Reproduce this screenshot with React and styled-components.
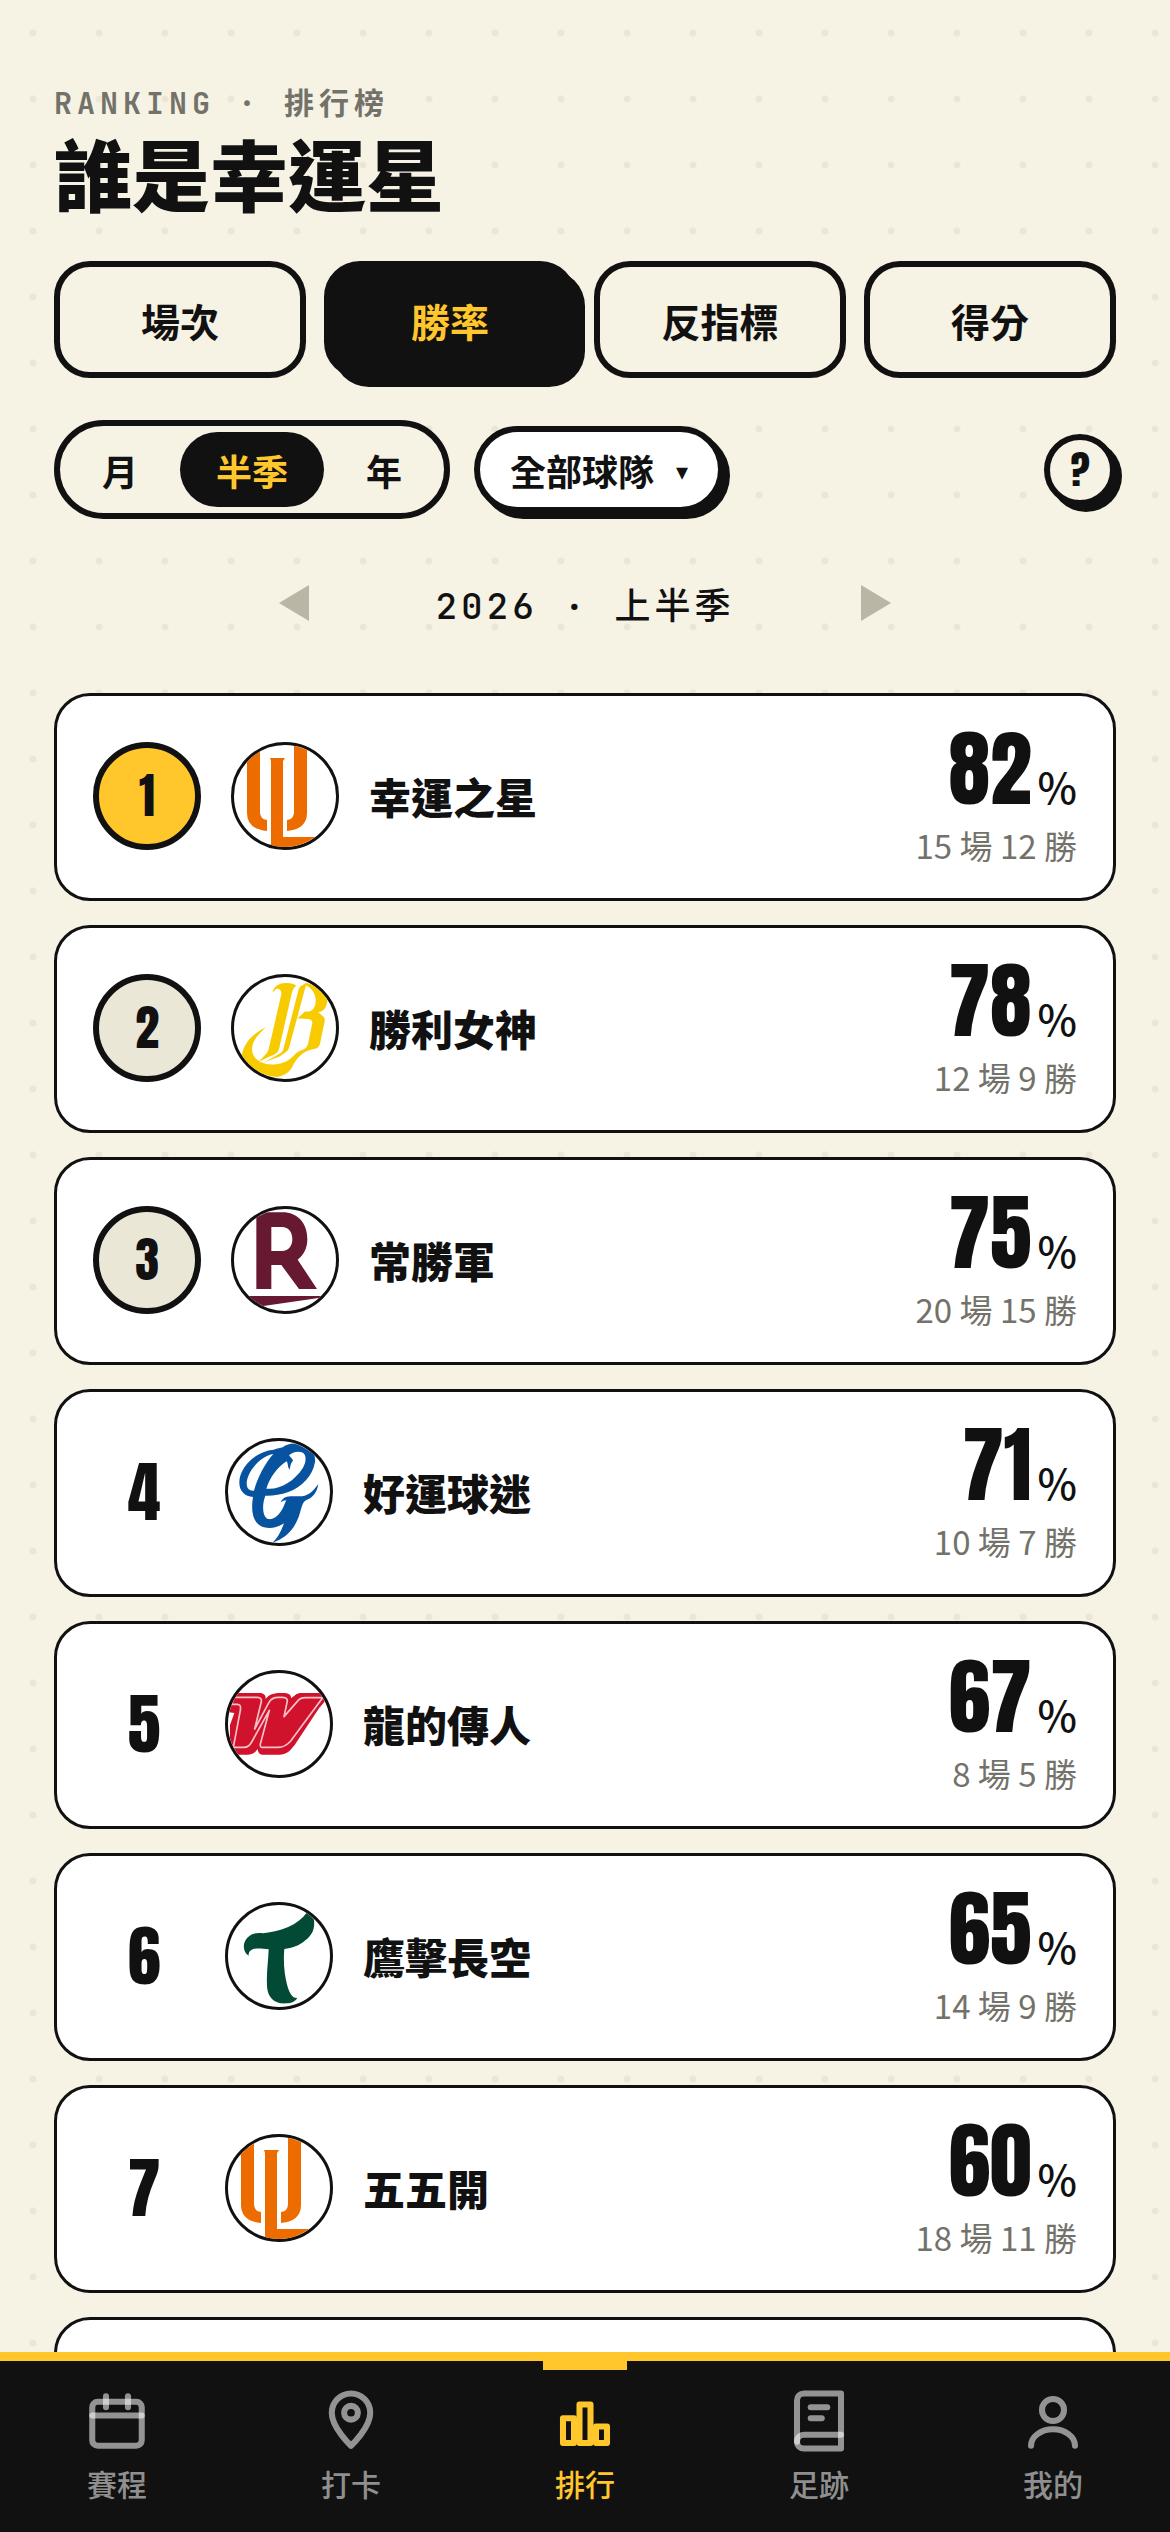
import { useState } from "react"
import styled, { createGlobalStyle } from "styled-components"

const INK = "#111111"
const PAPER = "#f6f2e4"
const YELLOW = "#ffc72c"
const SANS = '"Noto Sans CJK TC", "Noto Sans", sans-serif'
const MONO = '"JetBrains Mono", "DejaVu Sans Mono", "Noto Sans CJK TC", monospace'
const DISPLAY = 'Anton, Impact, Roboto, sans-serif'

const metrics = ["場次", "勝率", "反指標", "得分"]
const periods = ["月", "半季", "年"]

const players = [
    { name: "幸運之星", team: "lions", rate: 82, games: 15, wins: 12 },
    { name: "勝利女神", team: "brothers", rate: 78, games: 12, wins: 9 },
    { name: "常勝軍", team: "monkeys", rate: 75, games: 20, wins: 15 },
    { name: "好運球迷", team: "guardians", rate: 71, games: 10, wins: 7 },
    { name: "龍的傳人", team: "dragons", rate: 67, games: 8, wins: 5 },
    { name: "鷹擊長空", team: "hawks", rate: 65, games: 14, wins: 9 },
    { name: "五五開", team: "lions", rate: 60, games: 18, wins: 11 },
]

const navItems = [
    { id: "schedule", label: "賽程" },
    { id: "checkin", label: "打卡" },
    { id: "ranking", label: "排行" },
    { id: "history", label: "足跡" },
    { id: "profile", label: "我的" },
]

const logos = {
    lions: (
        <svg viewBox="0 0 102 102" fill="#ed6c00">
            <path d="M13 0H26V67Q26 74 33 75V86Q13 84 13 68Z" />
            <path d="M60 0H73V68Q73 84 53 86V75Q60 74 60 67Z" />
            <path d="M36 13H51L49 16V92H82V102H37V16Z" />
        </svg>
    ),
    brothers: (
        <svg viewBox="72 84 306 306" fill="#f8cb00">
            <path d="M187 131C192 111 207 101 231 102C244 102 252 105 259 110C252 114 249 121 246 130L207 300C204 311 196 317 184 320L146 338L168 315C174 308 175 304 177 296L214 136C215 124 207 117 198 120Z" />
            <path d="M288 102L273 111C268 115 266 120 264 128L220 301C217 311 210 315 198 320L160 341L210 322L228 309C235 303 236 300 238 293L288 108Z" />
            <path d="M286 102C315 105 340 124 352 153C351 174 342 187 325 190L342 205C346 211 344 219 342 226L331 280C328 294 322 300 311 300C286 304 267 318 250 347C241 369 225 378 203 384C162 382 116 362 95 318C103 281 128 254 168 235C141 259 126 278 126 301C127 325 144 340 174 346C206 348 231 340 248 323C266 303 278 304 287 297C293 291 294 284 296 275L307 222C307 213 302 210 293 210L262 208C273 199 279 193 286 187L294 188C308 186 318 174 317 153C316 133 306 118 286 108Z" />
        </svg>
    ),
    monkeys: (
        <svg viewBox="72 87 306 306" fill="#681932">
            <path fillRule="evenodd" d="M139 97H217C263 97 292 129 292 177C292 205 281 225 263 239L321 327H267L214 255H184V327H139ZM184 141V213H216C236 213 247 197 247 178C247 156 236 141 216 141Z" />
            <path d="M100 348H342L326 354L155 379C134 373 117 362 100 348Z" />
        </svg>
    ),
    guardians: (
        <svg viewBox="54 69 306 306" fill="#0853a0">
            <path fillRule="evenodd" d="M218 88C238 73 260 74 281 84C304 94 318 108 315 132C309 173 275 208 235 222C210 231 185 234 166 233C154 264 159 300 175 303C196 307 215 284 226 253L229 247C220 248 216 251 212 253C218 241 225 236 242 235L277 235C297 232 311 217 325 198C321 223 309 239 289 246C277 252 276 266 267 294C251 338 225 361 187 374C202 361 211 345 222 316C200 330 181 333 162 328C131 319 121 284 129 237C104 235 87 219 88 191C90 145 139 99 191 95C202 91 211 91 218 88ZM190 108C152 113 112 160 110 195C110 211 117 219 132 218C143 177 166 135 190 108ZM169 212C208 217 252 191 278 151C289 133 290 112 279 104C262 98 246 104 237 112C243 120 248 123 249 128C242 134 241 145 239 155C232 147 235 137 230 130C203 146 180 178 169 212Z" />
        </svg>
    ),
    dragons: (
        <svg viewBox="54 72 306 306">
            <path fill="#d0122d" d="M72 132H147C162 132 170 141 166 151L170 146C182 133 200 132 219 132C237 132 244 138 243 148L256 138C264 132 270 132 283 132H354C351 152 340 164 328 176L254 288C238 308 230 317 207 317H160C148 317 143 309 143 299C135 312 126 317 112 317H60V228L73 192L58 190V145Z" />
            <path fill="none" stroke="#f9c3ca" strokeWidth="5" strokeLinejoin="round" d="M65 166L72 145H141C153 145 156 151 153 162L134 240L177 160C183 149 191 145 205 145H218C230 145 234 151 231 161L222 203L264 155C270 148 276 146 286 146H338L242 276C229 291 220 295 204 295H155C150 295 150 287 152 281L178 184L125 279C119 290 113 295 103 295H70L91 184C93 170 90 166 82 166Z" />
        </svg>
    ),
    hawks: (
        <svg viewBox="54 84 306 306" fill="#024a35">
            <path d="M160 169C212 162 263 146 292 105L312 128C315 155 307 174 286 190C268 207 246 213 223 216C219 256 224 297 232 326C238 347 247 364 262 363C252 379 233 380 211 379C184 372 172 353 171 326C169 285 175 251 176 217C158 215 141 212 128 217C119 220 115 228 116 236C103 229 99 210 103 198C111 174 134 164 160 169Z" />
        </svg>
    ),
}

const navIcons = {
    schedule: (
        <>
            <rect x="3" y="5" width="18" height="16" rx="2" />
            <path d="M3 10h18" />
            <path d="M8 3v4" />
            <path d="M16 3v4" />
        </>
    ),
    checkin: (
        <>
            <path d="M12 21s-7-6.5-7-12a7 7 0 0 1 14 0c0 5.5-7 12-7 12z" />
            <circle cx="12" cy="9" r="2.5" />
        </>
    ),
    ranking: (
        <>
            <rect x="4" y="11" width="4" height="9" />
            <rect x="10" y="6" width="4" height="14" />
            <rect x="16" y="14" width="4" height="6" />
        </>
    ),
    history: (
        <>
            <path d="M4 19.5A2.5 2.5 0 0 1 6.5 17H20" />
            <path d="M6.5 2H20v20H6.5A2.5 2.5 0 0 1 4 19.5v-15A2.5 2.5 0 0 1 6.5 2z" />
            <path d="M9 7h6" />
            <path d="M9 11h4" />
        </>
    ),
    profile: (
        <>
            <circle cx="12" cy="8" r="4" />
            <path d="M4 21a8 6 0 0 1 16 0" />
        </>
    ),
}

export default function App() {
    const [metric, setMetric] = useState("勝率")
    const [period, setPeriod] = useState("半季")

    return (
        <Screen>
            <GlobalStyle />
            <Content>
                <header>
                    <Eyebrow>RANKING · 排行榜</Eyebrow>
                    <Title>誰是幸運星</Title>
                </header>

                <Metrics>
                    {metrics.map((m) => (
                        <MetricButton key={m} $active={m === metric} aria-pressed={m === metric} onClick={() => setMetric(m)}>
                            {m}
                        </MetricButton>
                    ))}
                </Metrics>

                <Filters>
                    <Segmented>
                        {periods.map((p) => (
                            <Segment key={p} $active={p === period} aria-pressed={p === period} onClick={() => setPeriod(p)}>
                                {p}
                            </Segment>
                        ))}
                    </Segmented>
                    <TeamFilter>
                        <select aria-label="球隊">
                            <option>全部球隊</option>
                        </select>
                        <span aria-hidden="true">▾</span>
                    </TeamFilter>
                    <HelpButton aria-label="說明">?</HelpButton>
                </Filters>

                <PeriodNav>
                    <ArrowButton aria-label="上一期">
                        <svg width="30" height="36" viewBox="0 0 30 36">
                            <path d="M30 0V36L0 18Z" fill="currentColor" />
                        </svg>
                    </ArrowButton>
                    <PeriodLabel>2026 · 上半季</PeriodLabel>
                    <ArrowButton aria-label="下一期">
                        <svg width="30" height="36" viewBox="0 0 30 36">
                            <path d="M0 0V36L30 18Z" fill="currentColor" />
                        </svg>
                    </ArrowButton>
                </PeriodNav>

                <List>
                    {players.map((p, i) => (
                        <Card key={p.name}>
                            {i < 3 ? <Medal $gold={i === 0}>{i + 1}</Medal> : <Rank>{i + 1}</Rank>}
                            <Logo aria-hidden="true">{logos[p.team]}</Logo>
                            <Name>{p.name}</Name>
                            <Score>
                                <Rate>
                                    {p.rate}
                                    <small>%</small>
                                </Rate>
                                <Record>{p.games} 場 {p.wins} 勝</Record>
                            </Score>
                        </Card>
                    ))}
                    <Card aria-hidden="true" />
                </List>
            </Content>

            <BottomNav>
                {navItems.map((item) => (
                    <NavLink key={item.id} href={"#" + item.id} $active={item.id === "ranking"}>
                        <svg viewBox="0 0 24 24" aria-hidden="true">{navIcons[item.id]}</svg>
                        {item.label}
                    </NavLink>
                ))}
            </BottomNav>
        </Screen>
    )
}

const GlobalStyle = createGlobalStyle`
* {
    box-sizing: border-box;
}
body {
    margin: 0;
    color: ${INK};
    font-family: ${SANS};
}
button, select {
    margin: 0;
    padding: 0;
    border: none;
    background: none;
    color: inherit;
    font-family: inherit;
    cursor: pointer;
}
`

const Screen = styled.div`
height: 100vh;
display: flex;
flex-direction: column;
background-color: ${PAPER};
background-image: radial-gradient(circle, rgba(17, 17, 17, 0.05) 3px, transparent 4px);
background-size: 66px 66px;
`

const Content = styled.main`
flex: 1;
min-height: 0;
overflow-y: auto;
scrollbar-width: none;
padding: 84px 54px 54px;
`

const Eyebrow = styled.p`
margin: 0;
font-family: ${MONO};
font-size: 30px;
font-weight: 600;
line-height: 39px;
letter-spacing: 5px;
color: #73726a;
`

const Title = styled.h1`
margin: 0;
font-size: 78px;
font-weight: 900;
line-height: 99px;
`

const Metrics = styled.div`
display: grid;
grid-template-columns: repeat(4, 1fr);
gap: 18px;
margin-top: 39px;
`

const MetricButton = styled.button`
height: 117px;
border: 6px solid ${INK};
border-radius: 36px;
background: ${(props) => (props.$active ? INK : PAPER)};
color: ${(props) => (props.$active ? YELLOW : INK)};
box-shadow: ${(props) => (props.$active ? `9px 9px 0 ${INK}` : "none")};
font-size: 39px;
font-weight: 700;
`

const Filters = styled.div`
display: flex;
align-items: center;
gap: 24px;
margin-top: 42px;
`

const Segmented = styled.div`
display: flex;
gap: 6px;
padding: 6px;
border: 6px solid ${INK};
border-radius: 99px;
background: ${PAPER};
`

const Segment = styled.button`
height: 75px;
padding: 0 36px;
border-radius: 99px;
background: ${(props) => (props.$active ? INK : "transparent")};
color: ${(props) => (props.$active ? YELLOW : INK)};
font-size: 36px;
font-weight: 700;
`

const TeamFilter = styled.label`
position: relative;
display: flex;
align-items: center;
border: 6px solid ${INK};
border-radius: 99px;
background: #ffffff;
box-shadow: 6px 6px 0 ${INK};
select {
    appearance: none;
    height: 75px;
    padding: 0 63px 0 30px;
    border-radius: 99px;
    font-size: 36px;
    font-weight: 700;
}
span {
    position: absolute;
    right: 30px;
    font-size: 24px;
    pointer-events: none;
}
`

const HelpButton = styled.button`
width: 72px;
height: 72px;
margin-left: auto;
border: 6px solid ${INK};
border-radius: 50%;
background: ${PAPER};
box-shadow: 6px 6px 0 ${INK};
font-family: ${DISPLAY};
font-size: 39px;
font-weight: 400;
line-height: 57px;
`

const PeriodNav = styled.div`
display: flex;
justify-content: center;
align-items: center;
gap: 99px;
margin: 42px 0 48px;
`

const ArrowButton = styled.button`
display: flex;
align-items: center;
justify-content: center;
width: 84px;
height: 84px;
color: #b9b6a5;
`

const PeriodLabel = styled.span`
font-family: ${MONO};
font-size: 36px;
font-weight: 500;
letter-spacing: 4px;
`

const List = styled.ol`
display: flex;
flex-direction: column;
gap: 24px;
margin: 0;
padding: 0;
list-style: none;
`

const Card = styled.li`
display: flex;
align-items: center;
gap: 30px;
height: 208px;
flex-shrink: 0;
padding: 0 36px 3px;
border: 3px solid ${INK};
border-radius: 36px;
background: #ffffff;
`

const Rank = styled.span`
width: 102px;
font-family: ${DISPLAY};
font-size: 66px;
font-weight: 400;
line-height: 96px;
text-align: center;
`

const Medal = styled(Rank)`
width: 108px;
height: 108px;
border: 6px solid ${INK};
border-radius: 50%;
background: ${(props) => (props.$gold ? YELLOW : "#ebe7d7")};
font-size: 48px;
`

const Logo = styled.span`
width: 108px;
height: 108px;
overflow: hidden;
border: 3px solid ${INK};
border-radius: 50%;
background: #ffffff;
svg {
    display: block;
    width: 100%;
    height: 100%;
}
`

const Name = styled.span`
flex: 1;
font-size: 42px;
font-weight: 900;
`

const Score = styled.div`
padding-top: 6px;
text-align: right;
`

const Rate = styled.div`
font-family: ${DISPLAY};
font-size: 84px;
font-weight: 400;
line-height: 90px;
small {
    margin-left: 6px;
    font-family: ${SANS};
    font-size: 42px;
    font-weight: 500;
    line-height: 42px;
}
`

const Record = styled.div`
margin-top: 3px;
font-size: 33px;
line-height: 57px;
color: #73726a;
`

const BottomNav = styled.nav`
display: grid;
grid-template-columns: repeat(5, 1fr);
border-top: 9px solid ${YELLOW};
background: ${INK};
`

const NavLink = styled.a`
position: relative;
display: flex;
flex-direction: column;
align-items: center;
gap: 8px;
height: 171px;
padding-top: 27px;
color: ${(props) => (props.$active ? YELLOW : "rgba(255, 255, 255, 0.55)")};
font-size: 30px;
font-weight: 500;
line-height: 42px;
text-decoration: none;
svg {
    width: 66px;
    height: 66px;
    fill: none;
    stroke: currentColor;
    stroke-width: 2.2;
    stroke-linecap: round;
    stroke-linejoin: round;
}
&::before {
    content: "";
    display: ${(props) => (props.$active ? "block" : "none")};
    position: absolute;
    top: 0;
    width: 84px;
    height: 9px;
    background: ${YELLOW};
}
`
